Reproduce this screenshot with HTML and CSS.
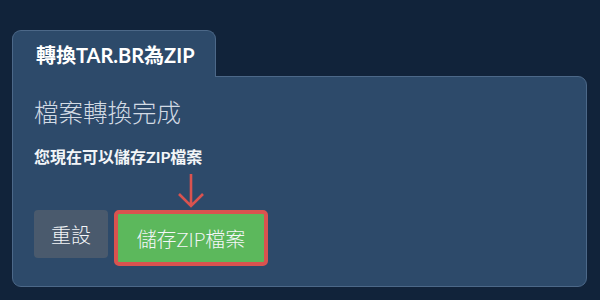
FILE: index.html
```html
<!DOCTYPE html>
<html lang="zh-Hant">
<head>
<meta charset="utf-8">
<link rel="stylesheet" href="styles.css">
</head>
<body>
<div class="wrap">
  <div class="tab">轉換TAR.BR為ZIP</div>
  <div class="panel">
    <div class="title">檔案轉換完成</div>
    <div class="msg">您現在可以儲存ZIP檔案</div>
    <div class="actions">
      <button class="btn reset">重設</button>
      <div class="save-wrap">
        <svg class="arrow" width="28" height="36" viewBox="0 0 28 36">
          <path d="M14 1 V33 M2 21 L14 33 L26 21" fill="none" stroke="#d9534f" stroke-width="2.6"/>
        </svg>
        <button class="btn save">儲存ZIP檔案</button>
      </div>
    </div>
  </div>
</div>
</body>
</html>
```
FILE: styles.css
```css
html, body {
  margin: 0;
  padding: 0;
  background: #11233a;
  width: 600px;
  height: 300px;
  overflow: hidden;
  font-family: Lato, "Noto Sans CJK TC", sans-serif;
}
.wrap {
  padding: 30px 13px 0 12px;
  display: flex;
  flex-direction: column;
  align-items: flex-start;
}
.tab {
  position: relative;
  z-index: 1;
  box-sizing: border-box;
  width: 204px;
  height: 47px;
  margin-bottom: -1px;
  padding: 1px 0 0 23px;
  line-height: 46px;
  background: #2d4a6a;
  border: 1px solid #4c6888;
  border-bottom: none;
  border-radius: 9px 9px 0 0;
  color: #ffffff;
  font-weight: 700;
  font-size: 20px;
}
.panel {
  box-sizing: border-box;
  width: 575px;
  height: 211px;
  background: #2d4a6a;
  border: 1px solid #4c6888;
  border-radius: 0 9px 9px 9px;
  padding: 20px 20px 0 21px;
}
.title {
  font-size: 24.5px;
  line-height: 32px;
  font-weight: 300;
  color: #d3dbe4;
}
.msg {
  margin-top: 17px;
  font-size: 16px;
  line-height: 22px;
  font-weight: 700;
  color: #f2f5f8;
}
.actions {
  margin-top: 42px;
  display: flex;
  align-items: flex-start;
  gap: 6px;
}
.btn {
  font-family: Lato, "Noto Sans CJK TC", sans-serif;
  font-size: 20px;
  font-weight: 300;
  color: #f4f6f8;
  border: none;
  margin: 0;
  cursor: pointer;
}
.reset {
  width: 74px;
  height: 48px;
  background: #4a5a6d;
  border-radius: 4px;
  padding: 0;
}
.save-wrap {
  position: relative;
}
.arrow {
  position: absolute;
  left: 63px;
  top: -37px;
}
.save {
  box-sizing: border-box;
  width: 154px;
  height: 56px;
  background: #5cb85c;
  border: 4px solid #d9534f;
  border-radius: 5px;
  padding: 0;
}
```
